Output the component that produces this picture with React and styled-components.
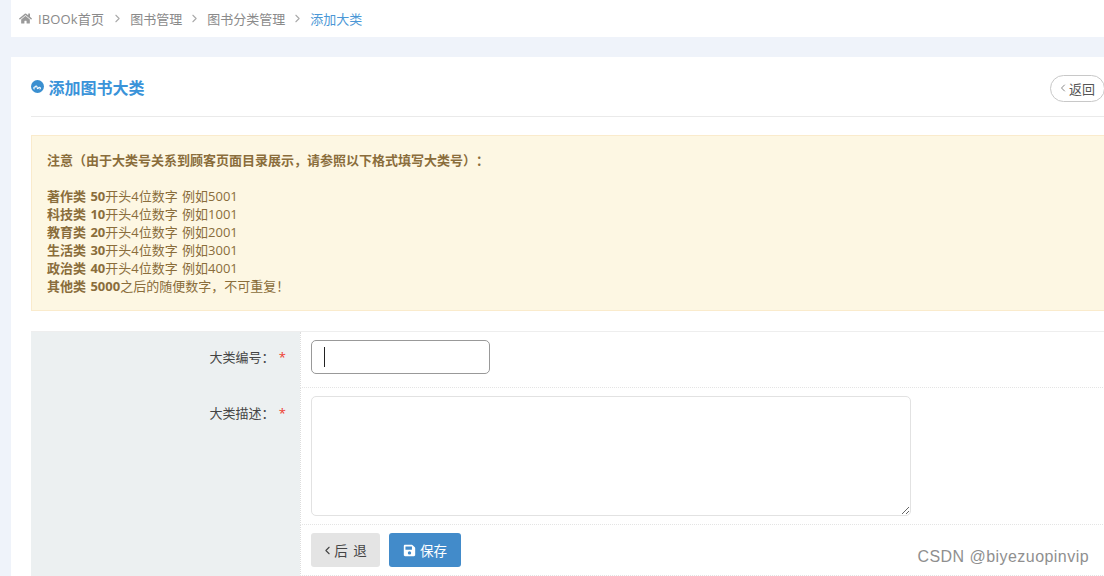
import React from "react";
import styled, { createGlobalStyle } from "styled-components";
import { FaHome, FaSave } from "react-icons/fa";
import { FiChevronLeft, FiChevronRight } from "react-icons/fi";

const GlobalStyle = createGlobalStyle`
  html, body {
    margin: 0;
    height: 100%;
    overflow: hidden;
    background: #eff3fa;
    font-family: "Open Sans", "Noto Sans CJK SC", sans-serif;
    font-size: 13px;
    color: #555;
    text-spacing-trim: space-all;
  }
`;

const Page = styled.div`
  width: 1104px;
  height: 576px;
  padding-left: 11px;
  box-sizing: border-box;
  overflow: hidden;
  position: relative;
`;

const Breadcrumb = styled.div`
  height: 37px;
  background: #fff;
  display: flex;
  align-items: center;
  padding-left: 8px;
  color: #8a8a8a;
  font-size: 13px;
  svg {
    flex: none;
  }
`;

const Crumb = styled.span`
  margin-left: ${(p) => (p.$first ? "6px" : "0")};
  margin-right: ${(p) => (p.$first ? "1px" : "0")};
  letter-spacing: ${(p) => (p.$first ? "0.15px" : "0")};
  color: ${(p) => (p.$active ? "#4b97d6" : "#8a8a8a")};
`;

const Sep = styled.span`
  display: flex;
  width: 25px;
  justify-content: center;
  color: #aaa;
  font-size: 13px;
`;

const Card = styled.div`
  margin-top: 20px;
  width: 1114px;
  height: 519px;
  background: #fff;
  padding: 0 20px;
  box-sizing: border-box;
`;

const TitleBar = styled.div`
  height: 60px;
  border-bottom: 1px solid #eaeaea;
  display: flex;
  align-items: center;
  justify-content: space-between;
  padding-top: 3px;
  box-sizing: border-box;
`;

const Title = styled.h2`
  margin: 0 0 3px;
  display: flex;
  align-items: center;
  gap: 4.5px;
  font-size: 16px;
  font-weight: 700;
  color: #3a93d9;
`;

const BackPill = styled.button`
  width: 55px;
  height: 27px;
  padding: 0 0 0 6px;
  border: 1px solid #c8c8c8;
  border-radius: 14px;
  background: #fff;
  color: #555;
  font: inherit;
  font-size: 13px;
  display: flex;
  align-items: center;
  justify-content: flex-start;
  svg {
    color: #888;
    flex: none;
  }
`;

const Notice = styled.div`
  margin-top: 18px;
  height: 176px;
  box-sizing: border-box;
  background: #fdf7e3;
  border: 1px solid #faebcc;
  padding: 15px;
  color: #8a6d3b;
  font-size: 13px;
  line-height: 18px;
  word-spacing: 1px;
  b {
    font-weight: 700;
  }
`;

const Gap = styled.div`
  height: 18px;
`;

const FormTable = styled.div`
  margin-top: 20px;
  display: grid;
  grid-template-columns: 269px 1fr;
  grid-template-rows: 56px 137px 51px;
  border-top: 1px solid #eee;
  height: 245px;
  box-sizing: border-box;
`;

const Label = styled.div`
  background: #ecf0f1;
  text-align: right;
  padding: 16px 14px 0 0;
  color: #444;
  font-size: 13px;
  line-height: 18px;
  i {
    font-style: normal;
    color: #ee3b2f;
    margin-left: 1px;
  }
`;

const Cell = styled.div`
  border-left: 1px dotted #ddd;
  border-bottom: 1px dotted #e4e4e4;
  padding: 8px 0 0 10px;
  box-sizing: border-box;
  position: relative;
`;

const CodeInput = styled.input`
  display: block;
  width: 179px;
  height: 34px;
  box-sizing: border-box;
  border: 1px solid #999;
  border-radius: 5px;
  background: #fff;
  outline: none;
  caret-color: transparent;
`;

const Caret = styled.span`
  position: absolute;
  left: 23px;
  top: 15px;
  width: 1px;
  height: 20px;
  background: #222;
`;

const DescArea = styled.textarea`
  display: block;
  width: 600px;
  height: 120px;
  box-sizing: border-box;
  border: 1px solid #e2e2e2;
  border-radius: 5px;
  background: #fff;
  outline: none;
`;

const Actions = styled.div`
  display: flex;
  gap: 9px;
`;

const Button = styled.button`
  height: 34px;
  width: ${(p) => (p.$primary ? "72px" : "69px")};
  padding: 0 ${(p) => (p.$primary ? "0" : "3px")} 0 0;
  border: none;
  border-radius: 3px;
  background: ${(p) => (p.$primary ? "#428bca" : "#e4e4e4")};
  color: ${(p) => (p.$primary ? "#fff" : "#444")};
  font: inherit;
  font-size: 13.5px;
  word-spacing: 2px;
  display: flex;
  align-items: center;
  justify-content: center;
  gap: ${(p) => (p.$primary ? "4px" : "0")};
`;

const Watermark = styled.div`
  position: absolute;
  right: 15px;
  top: 547px;
  font-family: "Liberation Sans", sans-serif;
  font-size: 16px;
  line-height: 20px;
  letter-spacing: 0.45px;
  color: #8f8f8f;
`;

// full-width punctuation, written as escapes so it can't get swapped for ascii
const noticeHead =
  "注意\uFF08由于大类号关系到顾客页面目录展示\uFF0C请参照以下格式填写大类号\uFF09\uFF1A";
const colon = "\uFF1A";

const rules = [
  ["著作类 50", "开头4位数字 例如5001"],
  ["科技类 10", "开头4位数字 例如1001"],
  ["教育类 20", "开头4位数字 例如2001"],
  ["生活类 30", "开头4位数字 例如3001"],
  ["政治类 40", "开头4位数字 例如4001"],
  ["其他类 5000", "之后的随便数字\uFF0C不可重复\uFF01"],
];

const TitleIcon = () => (
  <svg width="13" height="13" viewBox="0 0 13 13">
    <circle cx="6.5" cy="6.5" r="6.5" fill="#3a8fd0" />
    <path
      d="M3.200 8.800c-.9-.9-.2-2 .9-1.700.2-1.300 1.500-1.400 1.900-.3.200 1 0 1.900.8 2 .7 0 .5-1.500 1.500-1.500 1.100 0 1.500 1.100.6 1.600"
      fill="none"
      stroke="#fff"
      strokeWidth="1.100"
      strokeLinecap="round"
    />
  </svg>
);

const App = () => {
  return (
    <Page>
      <GlobalStyle />
      <Breadcrumb>
        <FaHome size={13} color="#9a9a9a" />
        <Crumb $first>IBOOk首页</Crumb>
        <Sep>
          <FiChevronRight />
        </Sep>
        <Crumb>图书管理</Crumb>
        <Sep>
          <FiChevronRight />
        </Sep>
        <Crumb>图书分类管理</Crumb>
        <Sep>
          <FiChevronRight />
        </Sep>
        <Crumb $active>添加大类</Crumb>
      </Breadcrumb>
      <Card>
        <TitleBar>
          <Title>
            <TitleIcon />
            添加图书大类
          </Title>
          <BackPill>
            <FiChevronLeft size={12} />
            返回
          </BackPill>
        </TitleBar>
        <Notice>
          <b>{noticeHead}</b>
          <Gap />
          {rules.map(([head, rest]) => (
            <div key={head}>
              <b>{head}</b>
              {rest}
            </div>
          ))}
        </Notice>
        <FormTable>
          <Label>
            大类编号{colon} <i>*</i>
          </Label>
          <Cell>
            <CodeInput readOnly />
            <Caret />
          </Cell>
          <Label>
            大类描述{colon} <i>*</i>
          </Label>
          <Cell>
            <DescArea readOnly />
          </Cell>
          <Label />
          <Cell>
            <Actions>
              <Button>
                <FiChevronLeft size={13} />后 退
              </Button>
              <Button $primary>
                <FaSave size={13} />
                保存
              </Button>
            </Actions>
          </Cell>
        </FormTable>
      </Card>
      <Watermark>CSDN @biyezuopinvip</Watermark>
    </Page>
  );
};

export default App;
